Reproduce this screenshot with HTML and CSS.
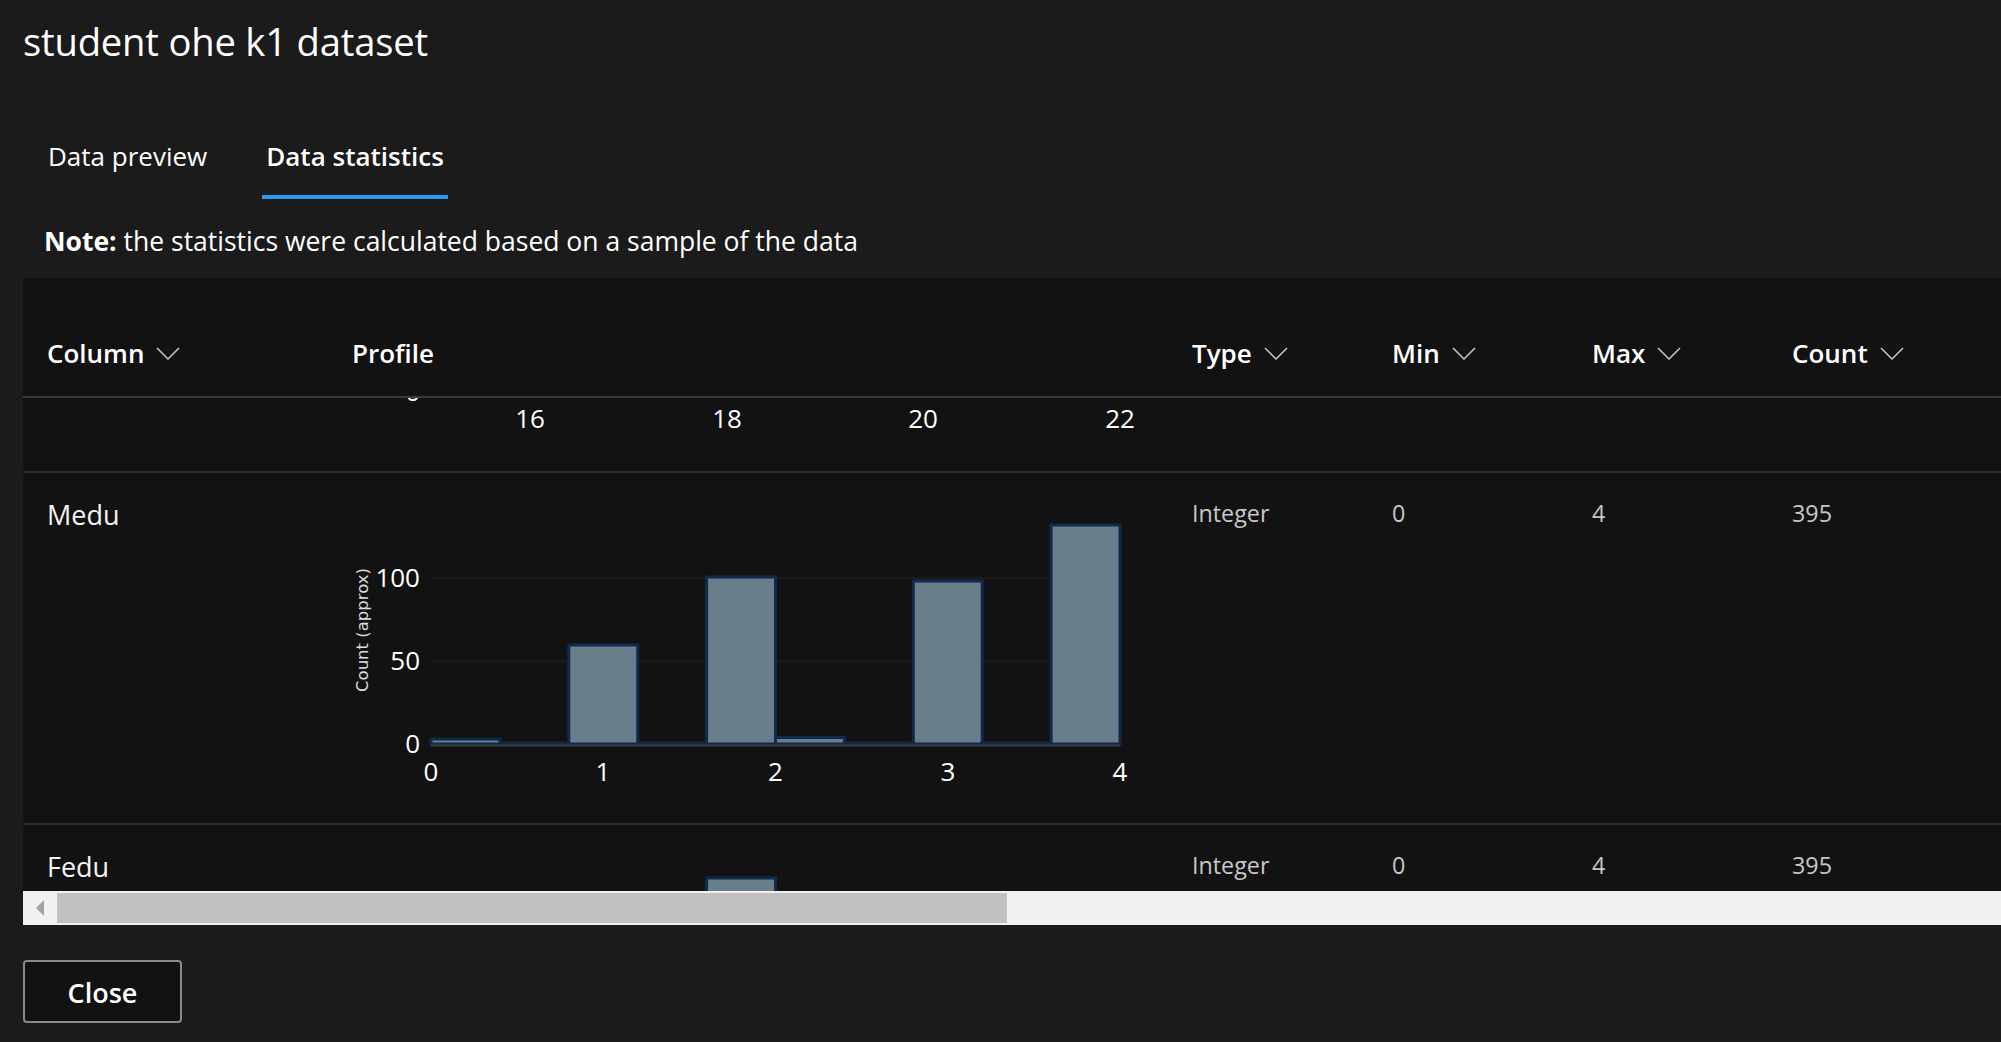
FILE: index.html
```html
<!DOCTYPE html>
<html lang="en">
<head>
<meta charset="utf-8">
<title>student ohe k1 dataset</title>
<link rel="stylesheet" href="styles.css">
</head>
<body>
<div class="dialog">
  <h1 class="title">student ohe k1 dataset</h1>
  <div class="tabs">
    <button class="tab">Data preview</button>
    <button class="tab active">Data statistics</button>
  </div>
  <p class="note"><b>Note:</b> the statistics were calculated based on a sample of the data</p>

  <div class="table">
    <div class="viewport">
      <div class="row head">
        <div class="cell">Column <svg class="chev" viewBox="0 0 24 13"><polyline points="1,1 12,12 23,1"/></svg></div>
        <div class="cell">Profile</div>
        <div class="cell">Type <svg class="chev" viewBox="0 0 24 13"><polyline points="1,1 12,12 23,1"/></svg></div>
        <div class="cell">Min <svg class="chev" viewBox="0 0 24 13"><polyline points="1,1 12,12 23,1"/></svg></div>
        <div class="cell">Max <svg class="chev" viewBox="0 0 24 13"><polyline points="1,1 12,12 23,1"/></svg></div>
        <div class="cell">Count <svg class="chev" viewBox="0 0 24 13"><polyline points="1,1 12,12 23,1"/></svg></div>
      </div>

      <div class="row partial">
        <div class="cell"></div>
        <div class="cell chart">
          <svg class="axis-tail" width="840" height="73" viewBox="0 0 840 73">
            <text class="tick" x="92" y="3" text-anchor="end">0</text>
            <text class="tick" x="202" y="30" text-anchor="middle">16</text>
            <text class="tick" x="399" y="30" text-anchor="middle">18</text>
            <text class="tick" x="595" y="30" text-anchor="middle">20</text>
            <text class="tick" x="792" y="30" text-anchor="middle">22</text>
          </svg>
        </div>
        <div class="cell"></div>
        <div class="cell"></div>
        <div class="cell"></div>
        <div class="cell"></div>
      </div>

      <div class="row data medu">
        <div class="cell name">Medu</div>
        <div class="cell chart">
          <svg width="840" height="350" viewBox="0 0 840 350">
            <line class="grid" x1="103" y1="188" x2="792" y2="188"/>
            <line class="grid" x1="103" y1="105" x2="792" y2="105"/>
            <g class="bars">
              <rect x="103" y="266" width="68.9" height="5"/>
              <rect x="171.9" y="270" width="68.9" height="1"/>
              <rect x="240.8" y="172" width="68.9" height="99"/>
              <rect x="309.7" y="270" width="68.9" height="1"/>
              <rect x="378.6" y="104" width="68.9" height="167"/>
              <rect x="447.5" y="264.5" width="68.9" height="6.5"/>
              <rect x="516.4" y="270" width="68.9" height="1"/>
              <rect x="585.3" y="108" width="68.9" height="163"/>
              <rect x="654.2" y="270" width="68.9" height="1"/>
              <rect x="723.1" y="52" width="68.9" height="219"/>
            </g>
            <line class="zero" x1="103" y1="272.5" x2="792" y2="272.5"/>
            <text class="tick" x="92" y="114" text-anchor="end">100</text>
            <text class="tick" x="92" y="197" text-anchor="end">50</text>
            <text class="tick" x="92" y="280" text-anchor="end">0</text>
            <text class="tick" x="103" y="308" text-anchor="middle">0</text>
            <text class="tick" x="275" y="308" text-anchor="middle">1</text>
            <text class="tick" x="447.5" y="308" text-anchor="middle">2</text>
            <text class="tick" x="620" y="308" text-anchor="middle">3</text>
            <text class="tick" x="792" y="308" text-anchor="middle">4</text>
            <text class="ytitle" transform="translate(40,157) rotate(-90)" text-anchor="middle">Count (approx)</text>
          </svg>
        </div>
        <div class="cell value">Integer</div>
        <div class="cell value">0</div>
        <div class="cell value">4</div>
        <div class="cell value">395</div>
      </div>

      <div class="row data fedu">
        <div class="cell name">Fedu</div>
        <div class="cell chart">
          <svg width="840" height="120" viewBox="0 0 840 120">
            <g class="bars">
              <rect x="378.6" y="53" width="68.9" height="200"/>
            </g>
          </svg>
        </div>
        <div class="cell value">Integer</div>
        <div class="cell value">0</div>
        <div class="cell value">4</div>
        <div class="cell value">395</div>
      </div>
    </div>
    <div class="hscroll">
      <div class="arrow"></div>
      <div class="thumb"></div>
    </div>
  </div>

  <button class="close">Close</button>
</div>
</body>
</html>
```

FILE: styles.css
```css
html, body {
  margin: 0;
  padding: 0;
}
body {
  background: #1b1b1b;
  color: #ffffff;
  font-family: "Segoe UI", "Open Sans", "Noto Sans", sans-serif;
  width: 2001px;
  height: 1042px;
  overflow: hidden;
}
.dialog {
  padding-left: 23px;
}
.title {
  margin: 0;
  padding-top: 16px;
  font-size: 38.2px;
  font-weight: 400;
  line-height: 50px;
  letter-spacing: -0.2px;
}
.tabs {
  display: flex;
  gap: 51px;
  margin-top: 72px;
  margin-left: 21px;
}
.tab {
  background: none;
  border: none;
  border-bottom: 4px solid transparent;
  color: #ffffff;
  font-family: inherit;
  font-size: 26px;
  line-height: 36px;
  font-weight: 400;
  padding: 0 4px 21px;
  margin: 0;
}
.tab.active {
  font-weight: 600;
  border-bottom-color: #2899f5;
}
.note {
  margin: 24px 0 0 21px;
  font-size: 26.5px;
  line-height: 36px;
}
.note b {
  font-weight: 700;
}
.table {
  margin-top: 19px;
  width: 1978px;
}
.viewport {
  height: 613px;
  overflow: hidden;
  background: #121212;
}
.row {
  display: grid;
  grid-template-columns: 305px 840px 200px 200px 200px 200px;
  border-bottom: 2px solid #2c2c2c;
}
.cell {
  padding-left: 24px;
  min-width: 0;
}
.head {
  height: 118px;
  align-items: end;
  border-bottom-color: #3a3a3a;
}
.head .cell {
  display: flex;
  align-items: center;
  gap: 12px;
  font-size: 26px;
  line-height: 36px;
  font-weight: 600;
  padding-bottom: 25px;
}
.chev {
  width: 24px;
  height: 13px;
  fill: none;
  stroke: #c8c8c8;
  stroke-width: 1.5;
}
.partial {
  height: 73px;
}
.chart {
  padding-left: 0;
}
.chart svg {
  display: block;
}
.medu {
  height: 350px;
}
.fedu {
  height: 200px;
}
.data .cell {
  padding-top: 24px;
}
.data .chart {
  padding-top: 0;
}
.name {
  font-size: 27px;
  line-height: 36px;
  color: #f4f4f4;
}
.value {
  font-size: 23.3px;
  line-height: 32px;
  color: #c8c8c8;
}
.tick {
  font-family: "Segoe UI", "Open Sans", "Noto Sans", sans-serif;
  font-size: 26px;
  fill: #ffffff;
}
.ytitle {
  font-family: "DejaVu Sans", sans-serif;
  font-size: 16.5px;
  fill: #dddddd;
}
.grid {
  stroke: #1f1f1f;
  stroke-width: 1.5;
}
.zero {
  stroke: #3e3e3e;
  stroke-width: 2;
}
.bars rect {
  fill: #687e8b;
  stroke: #0f2a4d;
  stroke-width: 3;
}
.hscroll {
  position: relative;
  height: 34px;
  background: #f1f1f1;
  display: flex;
  align-items: center;
}
.arrow {
  width: 0;
  height: 0;
  margin-left: 13px;
  border-top: 8px solid transparent;
  border-bottom: 8px solid transparent;
  border-right: 8px solid #a3a3a3;
}
.thumb {
  margin-left: 13px;
  width: 950px;
  height: 30px;
  background: #c1c1c1;
}
.close {
  display: block;
  margin-top: 35px;
  width: 159px;
  height: 63px;
  background: #121212;
  border: 2px solid #8a8a8a;
  border-radius: 4px;
  color: #ffffff;
  font-family: inherit;
  font-size: 27px;
  font-weight: 600;
  padding: 2px 0 0;
}
```
